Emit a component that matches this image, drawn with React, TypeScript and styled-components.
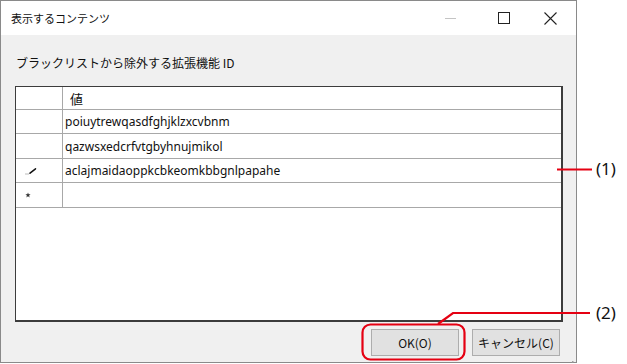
import React from 'react';
import styled, { createGlobalStyle } from 'styled-components';

const GlobalStyle = createGlobalStyle`
  html, body {
    margin: 0;
    padding: 0;
    background: #ffffff;
  }
  body {
    font-family: "Noto Sans CJK JP", "Noto Sans", sans-serif;
    color: #000;
  }
`;

const RED = '#e50012';

const rows = [
  { mark: '', value: 'poiuytrewqasdfghjklzxcvbnm', h: 23 },
  { mark: '', value: 'qazwsxedcrfvtgbyhnujmikol', h: 24 },
  { mark: 'edit', value: 'aclajmaidaoppkcbkeomkbbgnlpapahe', h: 23 },
  { mark: 'new', value: '', h: 24 },
];

const PencilIcon = () => (
  <svg width="12" height="8" viewBox="0 0 12 8">
    <path d="M0.5 7 H1.5 M2.5 7 H3.5" stroke="#777" strokeWidth="1" />
    <path d="M5 6.2 L10.5 1.8" stroke="#111" strokeWidth="1.5" strokeLinecap="round" />
  </svg>
);

const StarIcon = () => (
  <svg width="6" height="6" viewBox="0 0 7 7">
    <path
      d="M3.5 0.5 L4.3 2.6 L6.5 2.7 L4.8 4.1 L5.4 6.4 L3.5 5.1 L1.6 6.4 L2.2 4.1 L0.5 2.7 L2.7 2.6 Z"
      fill="#333"
    />
  </svg>
);

const App = () => {
  return (
    <>
      <GlobalStyle />
      <Page>
        <Window>
          <TitleBar>
            <Title>表示するコンテンツ</Title>
            <Controls>
              <ControlButton>
                <svg width="12" height="12" viewBox="0 0 12 12">
                  <path d="M0 6.5 H11" stroke="#c4c4c4" strokeWidth="1" />
                </svg>
              </ControlButton>
              <ControlButton>
                <svg width="12" height="12" viewBox="0 0 12 12">
                  <rect x="0.5" y="0.5" width="11" height="11" fill="none" stroke="#222" strokeWidth="1" />
                </svg>
              </ControlButton>
              <ControlButton>
                <svg width="13" height="13" viewBox="0 0 13 13">
                  <path d="M0.5 0.5 L12.5 12.5 M12.5 0.5 L0.5 12.5" stroke="#222" strokeWidth="1.1" />
                </svg>
              </ControlButton>
            </Controls>
          </TitleBar>
          <Body>
            <Label>ブラックリストから除外する拡張機能 ID</Label>
            <Grid>
              <Row $h={22}>
                <RowHead />
                <Cell $header>値</Cell>
              </Row>
              {rows.map((r, i) => (
                <Row key={i} $h={r.h}>
                  <RowHead>
                    {r.mark === 'edit' && <PencilIcon />}
                    {r.mark === 'new' && <StarIcon />}
                  </RowHead>
                  <Cell>{r.value}</Cell>
                </Row>
              ))}
            </Grid>
            <ButtonRow>
              <Button>OK(O)</Button>
              <Button>キャンセル(C)</Button>
            </ButtonRow>
          </Body>
          <Grip>
            <svg width="10" height="10" viewBox="0 0 10 10">
              {[
                [8, 2], [8, 5], [5, 5], [8, 8], [5, 8], [2, 8],
              ].map(([x, y], i) => (
                <rect key={i} x={x} y={y} width="1.5" height="1.5" fill="#a0a0a0" />
              ))}
            </svg>
          </Grip>
        </Window>

        <Callouts width="627" height="364" viewBox="0 0 627 364">
          <path d="M557 169.5 H592" stroke={RED} strokeWidth="2.2" fill="none" />
          <rect x="362.5" y="324.5" width="102" height="35" rx="8" ry="8" stroke={RED} strokeWidth="2.2" fill="none" />
          <path d="M438 324 L453 313 H590" stroke={RED} strokeWidth="2.2" fill="none" />
        </Callouts>
        <CalloutLabel $top={157}>(1)</CalloutLabel>
        <CalloutLabel $top={301}>(2)</CalloutLabel>
      </Page>
    </>
  );
};

export default App;

const Page = styled.div`
  position: relative;
  width: 627px;
  height: 364px;
  overflow: hidden;
  background: #fff;
`;

const Window = styled.div`
  position: relative;
  box-sizing: border-box;
  width: 577px;
  height: 363px;
  border: 1px solid #8a8a8a;
  background: #f0f0f0;
  display: flex;
  flex-direction: column;
`;

const TitleBar = styled.div`
  height: 34px;
  background: #ffffff;
  display: flex;
  align-items: center;
  justify-content: space-between;
  padding-left: 10px;
`;

const Title = styled.span`
  font-size: 11px;
  line-height: 14px;
  color: #111;
  margin-top: -1px;
`;

const Controls = styled.div`
  display: flex;
  align-items: center;
  height: 100%;
`;

const ControlButton = styled.div`
  width: 53px;
  height: 100%;
  display: flex;
  align-items: center;
  justify-content: center;
  &:last-child {
    width: 40px;
    padding-right: 6px;
  }
`;

const Body = styled.div`
  flex: 1;
  display: flex;
  flex-direction: column;
  padding: 20px 13px 0 14px;
`;

const Label = styled.div`
  font-size: 12px;
  line-height: 16px;
  color: #111;
  padding-left: 1px;
`;

const Grid = styled.div`
  margin-top: 15px;
  box-sizing: border-box;
  height: 236px;
  border: 1px solid #3c3c3c;
  border-right-width: 2px;
  border-bottom-width: 2px;
  background: #ffffff;
  display: flex;
  flex-direction: column;
`;

const Row = styled.div<{ $h: number }>`
  display: flex;
  height: ${({ $h }) => $h}px;
  border-bottom: 1px solid #a8a8a8;
`;

const RowHead = styled.div`
  width: 47px;
  flex: none;
  border-right: 1px solid #a8a8a8;
  display: flex;
  align-items: center;
  justify-content: flex-start;
  padding-left: 9px;
  box-sizing: border-box;
`;

const Cell = styled.div<{ $header?: boolean }>`
  flex: 1;
  display: flex;
  align-items: center;
  padding-left: ${({ $header }) => ($header ? '7px' : '2px')};
  font-family: ${({ $header }) =>
    $header ? '"Noto Sans CJK JP", sans-serif' : '"Noto Sans", "Noto Sans CJK JP", sans-serif'};
  font-size: ${({ $header }) => ($header ? '13px' : '12px')};
  color: #111;
  white-space: nowrap;
`;

const ButtonRow = styled.div`
  display: flex;
  justify-content: flex-end;
  gap: 13px;
  margin-top: 7px;
  padding-right: 3px;
`;

const Button = styled.div`
  box-sizing: border-box;
  width: 88px;
  height: 27px;
  background: #e1e1e1;
  border: 1px solid #adadad;
  display: flex;
  align-items: center;
  justify-content: center;
  font-size: 12px;
  color: #111;
`;

const Grip = styled.div`
  position: absolute;
  right: 2px;
  bottom: 2px;
  width: 10px;
  height: 10px;
`;

const Callouts = styled.svg`
  position: absolute;
  left: 0;
  top: 0;
  pointer-events: none;
`;

const CalloutLabel = styled.span<{ $top: number }>`
  position: absolute;
  left: 596px;
  top: ${({ $top }) => $top}px;
  font-family: "Noto Sans", sans-serif;
  font-size: 17px;
  line-height: 24px;
  color: #111;
`;
